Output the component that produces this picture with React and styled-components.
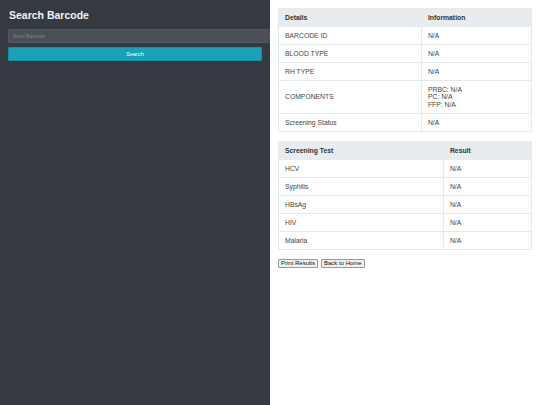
import React from "react";
import styled, { createGlobalStyle } from "styled-components";

const Global = createGlobalStyle`
  html, body { margin: 0; padding: 0; height: 100%; }
  body { font-family: "Liberation Sans", Arial, sans-serif; background: #fff; }
  #root { height: 100%; }
`;

const Page = styled.div`
  display: flex;
  height: 405px;
  width: 540px;
`;

const Sidebar = styled.aside`
  width: 270px;
  flex: none;
  box-sizing: border-box;
  background: #343a40;
  padding: 8px;
  overflow: hidden;
  color: #fff;
`;

const Title = styled.h2`
  margin: 0 0 7px 1px;
  font-size: 10.5px;
  line-height: 14px;
  font-weight: bold;
  color: #f1f3f5;
`;

const Input = styled.input`
  display: block;
  width: 100%;
  height: 12px;
  padding: 0 4px;
  margin: 0 0 4px 0;
  background: #495057;
  border: 1px solid #535a61;
  border-radius: 1px;
  font-family: "Liberation Sans", Arial, sans-serif;
  font-size: 5px;
  color: #fff;
  &::placeholder { color: #7d858c; }
  outline: none;
`;

const SearchButton = styled.button`
  display: block;
  width: 100%;
  height: 14px;
  padding: 0;
  background: #17a2b8;
  border: 1px solid #1591a5;
  border-radius: 1px;
  color: #fff;
  font-family: "Liberation Sans", Arial, sans-serif;
  font-size: 5.5px;
`;

const Main = styled.main`
  flex: 1;
  box-sizing: border-box;
  padding: 8px;
  color: #333;
`;

const Table = styled.table`
  width: 100%;
  border-collapse: collapse;
  margin-bottom: 9px;
  font-size: 6.8px;
  table-layout: fixed;
`;

const Th = styled.th`
  box-sizing: border-box;
  text-align: left;
  font-weight: bold;
  background: #e9ecef;
  color: #333;
  padding: 4.5px 6px;
  line-height: 8px;
  border: 1px solid #e9ecef;
  width: ${(p) => p.$w || "auto"};
`;

const Td = styled.td`
  padding: 4.5px 6px;
  line-height: 8px;
  border: 1px solid #e6e9ec;
  vertical-align: middle;
  color: #444;
`;

const Lines = styled.div`
  line-height: 7.8px;
`;

const Actions = styled.div`
  display: flex;
  gap: 3px;
`;

const SmallButton = styled.button`
  font-family: "Liberation Sans", Arial, sans-serif;
  font-size: 6px;
  padding: 0 2px;
  height: 9px;
  line-height: 7px;
  background: #f0f0f0;
  border: 1px solid #999;
  border-radius: 1px;
  color: #111;
`;

const details = [
  ["BARCODE ID", "N/A"],
  ["BLOOD TYPE", "N/A"],
  ["RH TYPE", "N/A"],
  ["COMPONENTS", null],
  ["Screening Status", "N/A"],
];

const tests = ["HCV", "Syphilis", "HBsAg", "HIV", "Malaria"];

export default function App() {
  return (
    <>
      <Global />
      <Page>
        <Sidebar>
          <Title>Search Barcode</Title>
          <Input placeholder="Enter Barcode" />
          <SearchButton>Search</SearchButton>
        </Sidebar>
        <Main>
          <Table>
            <thead>
              <tr>
                <Th $w="56.5%">Details</Th>
                <Th>Information</Th>
              </tr>
            </thead>
            <tbody>
              {details.map(([k, v]) => (
                <tr key={k}>
                  <Td>{k}</Td>
                  <Td>
                    {v ?? (
                      <Lines>
                        PRBC: N/A
                        <br />
                        PC: N/A
                        <br />
                        FFP: N/A
                      </Lines>
                    )}
                  </Td>
                </tr>
              ))}
            </tbody>
          </Table>
          <Table>
            <thead>
              <tr>
                <Th $w="65.2%">Screening Test</Th>
                <Th>Result</Th>
              </tr>
            </thead>
            <tbody>
              {tests.map((t) => (
                <tr key={t}>
                  <Td>{t}</Td>
                  <Td>N/A</Td>
                </tr>
              ))}
            </tbody>
          </Table>
          <Actions>
            <SmallButton>Print Results</SmallButton>
            <SmallButton>Back to Home</SmallButton>
          </Actions>
        </Main>
      </Page>
    </>
  );
}
